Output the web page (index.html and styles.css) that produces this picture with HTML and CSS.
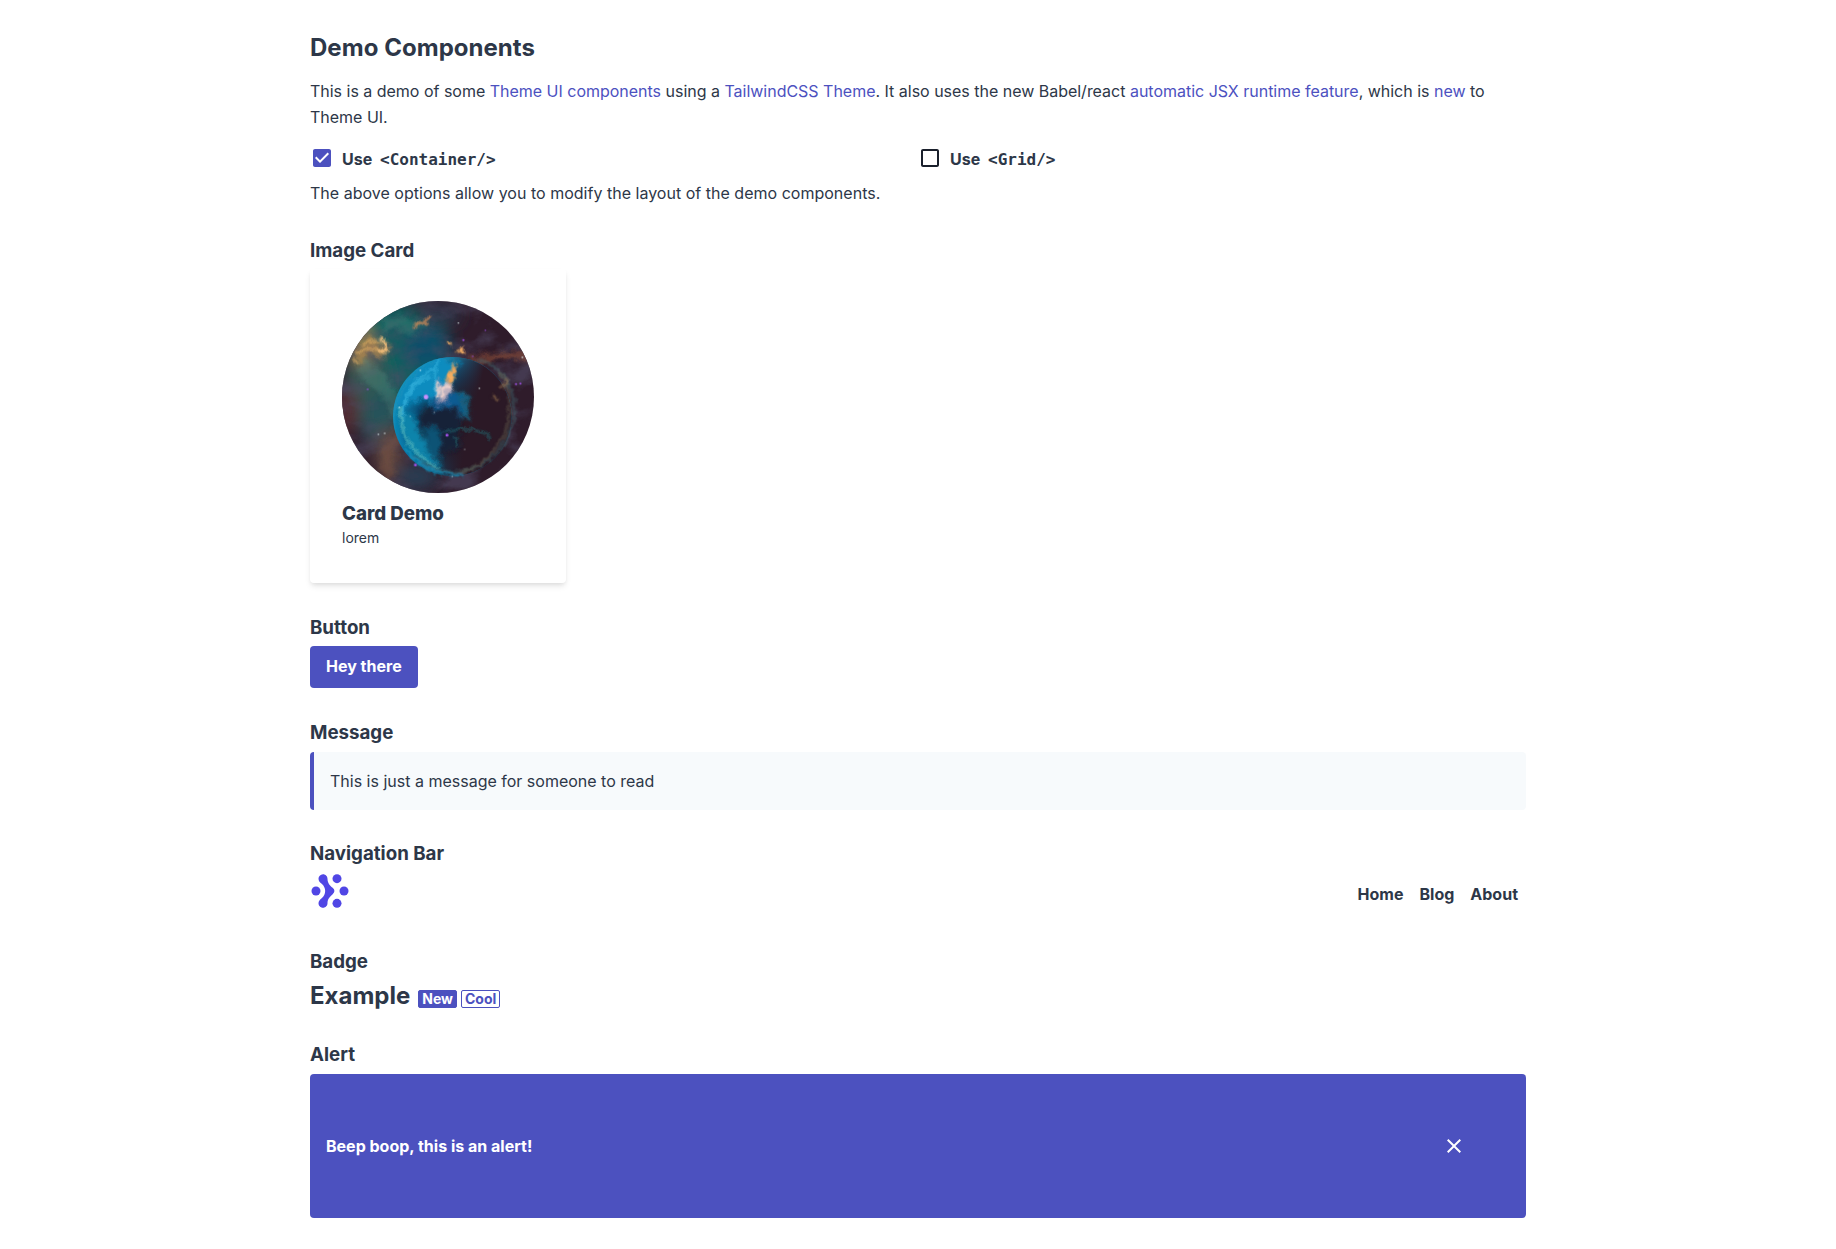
FILE: index.html
```html
<!DOCTYPE html>
<html lang="en">
<head>
<meta charset="utf-8">
<title>Demo Components</title>
<link rel="stylesheet" href="styles.css">
</head>
<body>
<main class="container">
  <h1 class="title">Demo Components</h1>
  <p class="intro">This is a demo of some <a href="#">Theme UI components</a> using a <a href="#">TailwindCSS Theme</a>. It also uses the new Babel/react <a href="#">automatic JSX runtime feature</a>, which is <a href="#">new</a> to Theme UI.</p>
  <div class="options">
    <div class="option">
      <svg class="check checked" viewBox="0 0 24 24"><path d="M19 3H5c-1.11 0-2 .9-2 2v14c0 1.1.89 2 2 2h14c1.11 0 2-.9 2-2V5c0-1.1-.89-2-2-2zm-9 14l-5-5 1.41-1.41L10 14.17l7.59-7.59L19 8l-9 9z"/></svg>
      <span>Use <code>&lt;Container/&gt;</code></span>
    </div>
    <div class="option">
      <svg class="check" viewBox="0 0 24 24"><path d="M19 5v14H5V5h14m0-2H5c-1.1 0-2 .9-2 2v14c0 1.1.9 2 2 2h14c1.1 0 2-.9 2-2V5c0-1.1-.9-2-2-2z"/></svg>
      <span>Use <code>&lt;Grid/&gt;</code></span>
    </div>
  </div>
  <p class="note">The above options allow you to modify the layout of the demo components.</p>

  <section class="demo">
    <h3>Image Card</h3>
    <div class="card">
      <svg class="nebula" viewBox="36 33 576 576">
        <defs>
          <filter id="b30" x="-50%" y="-50%" width="200%" height="200%"><feGaussianBlur stdDeviation="22"/></filter>
          <filter id="b10" x="-50%" y="-50%" width="200%" height="200%">
            <feTurbulence type="fractalNoise" baseFrequency=".03" numOctaves="4" seed="7" result="n"/>
            <feGaussianBlur in="SourceGraphic" stdDeviation="8" result="s"/>
            <feDisplacementMap in="s" in2="n" scale="36" xChannelSelector="R" yChannelSelector="G"/>
          </filter>
          <filter id="wisp" x="-30%" y="-30%" width="160%" height="160%">
            <feTurbulence type="fractalNoise" baseFrequency=".05" numOctaves="4" seed="4" result="n"/>
            <feGaussianBlur in="SourceGraphic" stdDeviation="3" result="s"/>
            <feDisplacementMap in="s" in2="n" scale="22" xChannelSelector="R" yChannelSelector="G"/>
          </filter>
          <filter id="cloud" x="0" y="0" width="100%" height="100%">
            <feTurbulence type="fractalNoise" baseFrequency=".009 .014" numOctaves="7" seed="9"/>
            <feColorMatrix values="0 0 0 0 .08  0 0 0 0 .07  0 0 0 0 .13  2 1.6 0 0 -1.5"/>
          </filter>
          <radialGradient id="bubble" gradientUnits="userSpaceOnUse" cx="395" cy="410" r="205">
            <stop offset="0" stop-color="#21151f"/><stop offset=".4" stop-color="#172638"/><stop offset=".7" stop-color="#09527a"/><stop offset=".96" stop-color="#0b83b5"/><stop offset="1" stop-color="#1b90ba"/>
          </radialGradient>
          <linearGradient id="fade" gradientUnits="userSpaceOnUse" x1="300" y1="345" x2="430" y2="375">
            <stop offset="0" stop-color="#2b1926" stop-opacity="0"/><stop offset="1" stop-color="#2b1926"/>
          </linearGradient>
          <clipPath id="round"><circle cx="324" cy="321" r="288"/></clipPath>
          <clipPath id="ball"><circle cx="367" cy="379" r="178"/></clipPath>
        </defs>
        <g clip-path="url(#round)">
          <rect x="36" y="33" width="576" height="576" fill="#2f1c2b"/>
          <g filter="url(#b30)">
            <ellipse cx="205" cy="180" rx="155" ry="140" fill="#07605f"/>
            <ellipse cx="110" cy="280" rx="65" ry="130" fill="#305a55"/>
            <ellipse cx="290" cy="175" rx="70" ry="65" fill="#07506a"/>
            <ellipse cx="325" cy="75" rx="70" ry="35" fill="#2a3446"/>
            <ellipse cx="155" cy="390" rx="60" ry="90" fill="#25525a"/>
            <ellipse cx="50" cy="360" rx="40" ry="70" fill="#522a31"/>
            <ellipse cx="175" cy="490" rx="45" ry="80" fill="#5b4440"/>
            <ellipse cx="260" cy="560" rx="65" ry="40" fill="#2a3e52"/>
            <ellipse cx="95" cy="165" rx="34" ry="66" fill="#93834f"/>
          </g>
          <rect x="36" y="33" width="576" height="576" filter="url(#cloud)" opacity=".65"/>
          <g filter="url(#b10)">
            <path d="M405 208Q490 182 605 185L620 202Q500 210 430 218Z" fill="#8a4e3a" opacity=".75"/>
            <path d="M195 420Q140 460 155 555L185 580Q185 510 210 440Z" fill="#7a543f" opacity=".5"/>
            <path d="M160 80Q270 70 290 110L240 140Q200 100 160 130Z" fill="#4c8a7a" opacity=".35"/>
            <path d="M90 210Q190 245 215 345L190 390Q160 290 95 270Z" fill="#5b9989" opacity=".3"/>
            <path d="M75 200L110 145L165 160L185 190L150 200L120 185L90 225Z" fill="#c08f4c" opacity=".6"/>
          </g>
          <g filter="url(#wisp)" fill="none">
            <path d="M80 190Q120 165 160 187M100 165Q125 145 155 160M68 210L85 220" stroke="#eab466" stroke-width="6" opacity=".75"/>
            <path d="M152 142Q182 172 164 187Q152 179 144 176" stroke="#ffc67f" stroke-width="9"/>
            <path d="M258 112Q255 95 275 99Q292 105 300 76" stroke="#c98758" stroke-width="8"/>
            <path d="M350 156l14 8M380 182l22 4M394 172v14" stroke="#ffb566" stroke-width="8"/>
          </g>
          <circle cx="367" cy="379" r="178" fill="url(#bubble)"/>
          <g clip-path="url(#ball)">
            <rect x="180" y="190" width="380" height="380" fill="url(#fade)"/>
            <g filter="url(#b10)">
              <path d="M200 345Q220 240 330 205L385 212L362 325L280 330Z" fill="#0a8cbf"/>
              <path d="M285 335L380 310L415 380L335 365Z" fill="#0b5c92"/>
              <path d="M200 350Q195 450 285 520L350 560Q275 470 255 385Z" fill="#0784ab"/>
              <path d="M275 355L390 350L390 470L320 500L272 440Z" fill="#182338"/>
              <path d="M280 400L330 425L330 510L290 490Z" fill="#0d5374"/>
              <path d="M385 310Q410 330 410 385" stroke="#146683" stroke-width="16" fill="none"/>
              <path d="M322 330L334 285L358 270L368 300L335 335Z" fill="#c5b3bf"/>
            </g>
            <g filter="url(#wisp)" fill="none">
              <path d="M222 370Q228 275 313 235M215 405Q210 300 300 258M325 205Q305 260 318 320" stroke="#42c0e8" stroke-width="7" opacity=".6"/>
              <path d="M212 350Q199 455 320 535" stroke="#63c2c0" stroke-width="8" opacity=".7"/>
              <path d="M340 428Q380 412 430 420T480 450M370 440q15 10 8 28" stroke="#247078" stroke-width="6" opacity=".7"/>
            </g>
          </g>
          <g filter="url(#wisp)" fill="none">
            <path d="M250 495Q340 580 455 525Q560 455 553 330Q530 225 440 208" stroke="#3f6c72" stroke-width="9" opacity=".5"/>
            <path d="M390 548Q465 535 525 430Q560 300 505 240" stroke="#7c7a5e" stroke-width="6" opacity=".5"/>
            <path d="M225 475Q285 560 400 554" stroke="#1a94be" stroke-width="7" opacity=".85"/>
            <path d="M374 226Q378 257 358 278L354 264Z" fill="#ffbb69" stroke="#f0a457" stroke-width="7"/>
            <path d="M322 270V328M338 322L334 295L357 285" stroke="#ffdccf" stroke-width="8"/>
            <path d="M532 267l-14 28M487 320l14 8" stroke="#9a7750" stroke-width="7" opacity=".8"/>
          </g>
          <g fill="#a553ee"><circle cx="288" cy="321" r="7" fill="#c990ff"/><circle cx="351" cy="435" r="4.5"/><circle cx="256" cy="525" r="4"/><circle cx="558" cy="282" r="3"/><circle cx="571" cy="281" r="3"/><circle cx="400" cy="150" r="3"/><circle cx="113" cy="298" r="2.5"/><circle cx="466" cy="121" r="2"/><circle cx="428" cy="199" r="2"/></g>
          <g fill="#eff"><circle cx="385" cy="99" r="2"/><circle cx="577" cy="202" r="2.5"/><circle cx="145" cy="433" r="2"/><circle cx="164" cy="430" r="2"/><circle cx="208" cy="352" r="2"/><circle cx="271" cy="241" r="2"/><circle cx="448" cy="295" r="2"/><circle cx="241" cy="379" r="1.5"/><circle cx="313" cy="367" r="1.5"/><circle cx="404" cy="478" r="1.5"/><circle cx="367" cy="559" r="1.5"/></g>
        </g>
      </svg>
      <h2>Card Demo</h2>
      <p class="small">lorem</p>
    </div>
  </section>

  <section class="demo">
    <h3>Button</h3>
    <button class="button">Hey there</button>
  </section>

  <section class="demo">
    <h3>Message</h3>
    <div class="message">This is just a message for someone to read</div>
  </section>

  <section class="demo">
    <h3>Navigation Bar</h3>
    <nav class="nav">
      <svg class="logo" viewBox="30 24 120 132">
        <circle cx="48" cy="78" r="13.5"/><circle cx="111" cy="41" r="13.5"/><circle cx="132" cy="78" r="13.5"/><circle cx="111" cy="115" r="13.5"/>
        <path d="M69 27.500C77 27.500 82.500 34 82.500 41C82.500 54 89 60 98 68.500C105 75 105 81 98 87.500C89 96 82.500 102 82.500 115C82.500 122 77 128.500 69 128.500C61 128.500 55.500 122 55.500 115C55.500 108 60 104 65 100C79 88 79 68 65 56C60 52 55.500 48 55.500 41C55.500 34 61 27.500 69 27.500Z"/>
      </svg>
      <div class="links"><a href="#">Home</a><a href="#">Blog</a><a href="#">About</a></div>
    </nav>
  </section>

  <section class="demo">
    <h3>Badge</h3>
    <div class="example">Example <span class="badge">New</span> <span class="badge outline">Cool</span></div>
  </section>

  <section class="demo">
    <h3>Alert</h3>
    <div class="alert">
      <span>Beep boop, this is an alert!</span>
      <svg class="close" viewBox="0 0 24 24"><path d="M19 6.410L17.590 5 12 10.590 6.410 5 5 6.410 10.590 12 5 17.590 6.410 19 12 13.410 17.590 19 19 17.590 13.410 12z"/></svg>
    </div>
  </section>
</main>
</body>
</html>
```
FILE: styles.css
```css
* { box-sizing: border-box; }
body {
  margin: 0;
  background: #fff;
  color: #2d3748;
  font-family: Inter, "Liberation Sans", sans-serif;
  font-size: 16px;
  line-height: 26px;
}
h1, h2, h3, p { margin: 0; }
a { color: #4c51bf; text-decoration: none; }
.container { max-width: 1280px; margin: 0 auto; padding: 33px 32px 32px; }
.title { font-size: 24px; line-height: 30px; font-weight: 700; letter-spacing: .04px; margin-bottom: 15px; }
.intro { margin-bottom: 16px; letter-spacing: -.014px; }
.note { letter-spacing: .014px; }
.options { display: grid; grid-template-columns: 1fr 1fr; height: 34px; }
.option { display: flex; align-items: flex-start; gap: 8px; font-weight: 650; }
.option code { font-family: "DejaVu Sans Mono", monospace; font-size: 16px; margin-left: 4px; }
.check { width: 24px; height: 24px; fill: #1a202c; }
.check.checked { fill: #4c51bf; }
.demo { margin-top: 32px; }
.demo h3 { padding-top: .6px; font-size: 18.72px; line-height: 23.4px; font-weight: 650; margin-bottom: 7.4px; }
.card {
  width: 256px;
  height: 313.6px;
  padding: 32px;
  border-radius: 4px;
  box-shadow: 0 4px 6px -1px rgba(0,0,0,.1), 0 2px 4px -1px rgba(0,0,0,.06);
}
.nebula { display: block; width: 192px; height: 192px; margin-bottom: 8.6px; }
.card h2 { font-size: 18.72px; line-height: 23.4px; font-weight: 850; margin-bottom: 1.4px; }
.small { font-size: 14px; line-height: 22.75px; }
.button {
  display: block;
  height: 42px;
  padding: 8px 16px;
  border: 0;
  border-radius: 4px;
  background: #4c51bf;
  color: #fff;
  font: 650 16px/20px Inter, sans-serif;
  padding-bottom: 10px;
}
.message { padding: 16px; border-left: 4px solid #4c51bf; border-radius: 4px; background: #f7fafc; }
.nav { display: flex; justify-content: space-between; align-items: center; height: 44px; padding-right: 8px; }
.logo { width: 40px; height: 44px; fill: #5046e5; }
.links { display: flex; gap: 16px; padding-bottom: 3px; }
.links a { color: #2d3748; font-weight: 650; }
.example { font-size: 24px; line-height: 30px; font-weight: 650; display: flex; align-items: baseline; }
.badge {
  margin-left: 8px;
  padding: 0 3px;
  border: 1px solid #4c51bf;
  border-radius: 2px;
  background: #4c51bf;
  color: #fff;
  font-size: 14px;
  line-height: 16px;
}
.badge.outline { margin-left: 4px; background: none; color: #4c51bf; }
.alert {
  display: flex;
  align-items: center;
  justify-content: space-between;
  height: 144px;
  padding: 0 60px 0 16px;
  border-radius: 4px;
  background: #4c51bf;
  color: #fff;
  font-weight: 650;
}
.close { width: 24px; height: 24px; fill: #fff; }
```
